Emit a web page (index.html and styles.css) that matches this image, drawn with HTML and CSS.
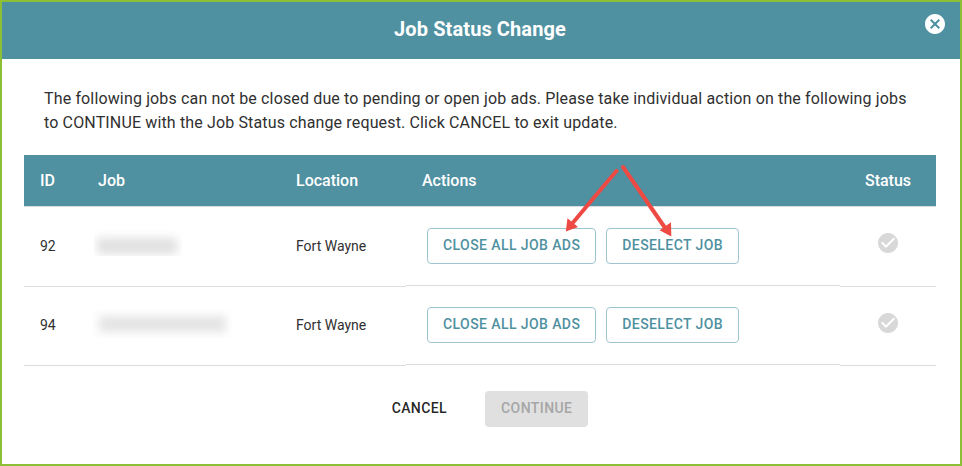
FILE: index.html
```html
<!doctype html>
<html lang="en">
<head>
<meta charset="utf-8">
<title>Job Status Change</title>
<link rel="stylesheet" href="styles.css">
</head>

<body>
<div class="dialog">
  <div class="dialog-header">
    <h1>Job Status Change</h1>
    <button class="close" aria-label="Close">
      <svg viewBox="0 0 24 24" width="24" height="24"><path fill="#fff" d="M12 2C6.47 2 2 6.47 2 12s4.47 10 10 10 10-4.47 10-10S17.53 2 12 2zm5 13.59L15.59 17 12 13.41 8.41 17 7 15.59 10.59 12 7 8.41 8.41 7 12 10.59 15.59 7 17 8.41 13.41 12 17 15.59z"/></svg>
    </button>
  </div>

  <p class="message">The following jobs can not be closed due to pending or open job ads. Please take individual action on the following jobs<br>to CONTINUE with the Job Status change request. Click CANCEL to exit update.</p>

  <div class="jobs">
    <div class="row head">
      <div class="cell">ID</div>
      <div class="cell">Job</div>
      <div class="cell">Location</div>
      <div class="cell">Actions</div>
      <div class="cell status">Status</div>
    </div>
    <div class="row">
      <div class="cell">92</div>
      <div class="cell"><span class="redacted"></span></div>
      <div class="cell">Fort Wayne</div>
      <div class="cell actions">
        <button class="btn outlined">CLOSE ALL JOB ADS</button>
        <button class="btn outlined">DESELECT JOB</button>
      </div>
      <div class="cell status">
        <svg viewBox="0 0 24 24" width="24" height="24"><path fill="#d8d8d8" d="M12 2C6.48 2 2 6.48 2 12s4.48 10 10 10 10-4.48 10-10S17.52 2 12 2zm-2 15l-5-5 1.41-1.41L10 14.17l7.59-7.59L19 8l-9 9z"/></svg>
      </div>
    </div>
    <div class="row">
      <div class="cell">94</div>
      <div class="cell"><span class="redacted wide"></span></div>
      <div class="cell">Fort Wayne</div>
      <div class="cell actions">
        <button class="btn outlined">CLOSE ALL JOB ADS</button>
        <button class="btn outlined">DESELECT JOB</button>
      </div>
      <div class="cell status">
        <svg viewBox="0 0 24 24" width="24" height="24"><path fill="#d8d8d8" d="M12 2C6.48 2 2 6.48 2 12s4.48 10 10 10 10-4.48 10-10S17.52 2 12 2zm-2 15l-5-5 1.41-1.41L10 14.17l7.59-7.59L19 8l-9 9z"/></svg>
      </div>
    </div>
  </div>

  <div class="dialog-footer">
    <button class="btn text">CANCEL</button>
    <button class="btn disabled" disabled>CONTINUE</button>
  </div>

  <!-- arrows pointing at the two actions of the first job -->
  <svg class="arrows" viewBox="560 160 120 80" width="120" height="80">
    <g stroke="#ee4a44" stroke-width="4" stroke-linecap="round">
      <path d="M616.6 170.8L572 223.7"/>
      <path d="M623 167L665.5 228.5"/>
    </g>
    <g fill="#ee4a44">
      <path d="M565.8 231.5L567.5 218.2L578 227z"/>
      <path d="M671.3 236.5L659.6 230.2L671 222.3z"/>
    </g>
  </svg>
</div>
</body>
</html>
```
FILE: styles.css
```css
* {
  box-sizing: border-box;
}

body {
  margin: 0;
  background: #fff;
  color: #303030;
  font-family: Roboto, "Liberation Sans", sans-serif;
}

.dialog {
  position: relative;
  height: 466px;
  border: 2px solid #8cbf35;
  overflow: hidden;
}

.dialog-header {
  display: grid;
  grid-template-columns: 1fr auto 1fr;
  height: 57px;
  padding: 10px 13px 0 11px;
  background: #4f91a1;
  color: #fff;
}

.dialog-header h1 {
  grid-column: 2;
  margin: 0;
  padding-top: 1px;
  font-size: 20px;
  font-weight: 700;
  letter-spacing: 0.1px;
  line-height: 32px;
}

.close {
  justify-self: end;
  width: 24px;
  height: 24px;
  padding: 0;
  border: 0;
  background: none;
}

.close svg,
.status svg {
  display: block;
}

.message {
  margin: 28px 42px 20px;
  font-size: 16px;
  line-height: 24px;
  letter-spacing: 0.144px;
  white-space: nowrap;
}

/* jobs table */
.jobs {
  margin: 0 24px 0 22px;
}

.row {
  display: grid;
  grid-template-columns: 58px 198px 126px 434px 96px;
  align-items: start;
  height: 79.5px;
}

.cell {
  display: flex;
  align-items: center;
  height: 79.5px;
  padding: 0 16px;
  border-bottom: 1px solid #dcdcdc;
  font-size: 14px;
}

.row:last-child .cell {
  padding-bottom: 1px;
}

.head,
.head .cell {
  height: 52px;
}

.head .cell {
  background: #4f91a1;
  background-clip: padding-box;
  color: #fff;
  font-size: 16px;
  font-weight: 500;
}

.row .actions {
  gap: 10px;
  height: 78.5px;
  padding-left: 21px;
  padding-bottom: 0;
}

.status {
  justify-content: center;
}

.row:not(.head) .status {
  padding-bottom: 6px;
}

/* blurred job name, cut off at the edges of its box */
.redacted {
  width: 88px;
  height: 27px;
  margin: 0 0 8px -4px;
  padding: 9px 5px 2px 3px;
  overflow: hidden;
}

.redacted::before {
  content: "";
  display: block;
  height: 16px;
  background: #e0e0e0;
  filter: blur(5px);
}

.redacted.wide {
  width: 139px;
  height: 29px;
  margin: 0 0 3px -5px;
  padding: 7px 6px;
}

.redacted.wide::before {
  background: #e4e4e4;
}

/* buttons */
.btn {
  height: 36px;
  padding: 0 15px 2px;
  border: 0;
  border-radius: 4px;
  background: none;
  color: rgba(0, 0, 0, 0.87);
  font-family: inherit;
  font-size: 14px;
  font-weight: 500;
  letter-spacing: 0.41px;
  line-height: 32px;
  white-space: nowrap;
}

.outlined {
  border: 1px solid #9fc6d0;
  color: #4f91a1;
}

.disabled {
  padding: 0 16px 2px;
  background: #e0e0e0;
  color: #a6a6a6;
}

.dialog-footer {
  display: flex;
  justify-content: center;
  gap: 23px;
  padding: 25px 0 0 3px;
}

.arrows {
  position: absolute;
  left: 558px;
  top: 158px;
}
```
